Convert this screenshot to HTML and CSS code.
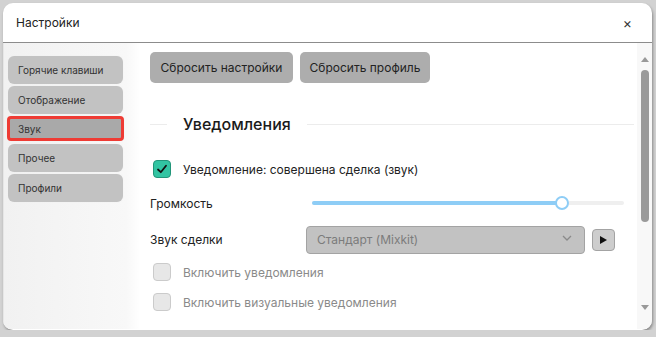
FILE: index.html
```html
<!DOCTYPE html>
<html lang="ru">
<head>
    <meta charset="UTF-8">
    <title>Настройки</title>
    <link rel="stylesheet" href="styles.css">
</head>
<body>
<div class="dialog">
    <div class="dlg_head">
        <span class="dlg_title">Настройки</span>
        <span class="dlg_close">×</span>
    </div>
    <div class="dlg_body">
        <!--меню слева-->
        <div class="side">
            <div class="side_item">Горячие клавиши</div>
            <div class="side_item">Отображение</div>
            <div class="side_item active">Звук</div>
            <div class="side_item">Прочее</div>
            <div class="side_item">Профили</div>
        </div>
        <!--основная часть-->
        <div class="main">
            <div class="actions">
                <button class="btn btn_wide">Сбросить настройки</button>
                <button class="btn">Сбросить профиль</button>
            </div>

            <div class="sec_title">
                <span class="line_short"></span>
                <span class="sec_text">Уведомления</span>
                <span class="line_long"></span>
            </div>

            <div class="row row_cb">
                <span class="cb checked">
                    <svg width="12" height="12" viewBox="0 0 12 12"><path d="M2 6.5 L4.8 9.2 L10 2.8" fill="none" stroke="#111" stroke-width="1.8" stroke-linecap="round" stroke-linejoin="round"/></svg>
                </span>
                <span class="cb_label">Уведомление: совершена сделка (звук)</span>
            </div>

            <div class="row row_vol">
                <span class="lbl">Громкость</span>
                <div class="slider">
                    <div class="slider_fill" style="width: 250px"></div>
                    <div class="slider_thumb"></div>
                </div>
            </div>

            <div class="row row_snd">
                <span class="lbl lbl_snd">Звук сделки</span>
                <div class="select">
                    <span>Стандарт (Mixkit)</span>
                    <svg class="chev" width="10" height="6" viewBox="0 0 10 6"><path d="M1 1 L5 5 L9 1" fill="none" stroke="#8a8a8a" stroke-width="1.3"/></svg>
                </div>
                <div class="play">
                    <svg width="7" height="8" viewBox="0 0 7 8"><path d="M0 0 L7 4 L0 8 Z" fill="#111"/></svg>
                </div>
            </div>

            <div class="row row_cb">
                <span class="cb off"></span>
                <span class="cb_label dis">Включить уведомления</span>
            </div>
            <div class="row row_cb">
                <span class="cb off"></span>
                <span class="cb_label dis">Включить визуальные уведомления</span>
            </div>
        </div>
        <!--полоса прокрутки-->
        <div class="scroll">
            <span class="arr arr_up"></span>
            <span class="thumb"></span>
            <span class="arr arr_down"></span>
        </div>
    </div>
</div>
</body>
</html>
```

FILE: styles.css
```css
*{
    margin: 0px;
    padding: 0px;
    box-sizing: border-box;
}
body{
    background-color: #d2d2d2;
    padding: 3px 4px 0 3px;
    font-family: Inter, "Noto Sans", sans-serif;
    color: #222;
}
.dialog{
    width: 649px;
    height: 327px;
    background-color: white;
    border-radius: 10px;
    box-shadow: 1px 2px 3px rgba(0,0,0,0.35);
    overflow: hidden;
}
.dlg_head{
    height: 40px;
    border-bottom: 1px solid #8c8c8c;
    display: flex;
    align-items: center;
    justify-content: space-between;
    padding: 0 20px 0 13px;
}
.dlg_title{
    font-size: 12px;
}
.dlg_close{
    font-size: 14px;
    color: #333;
}
.dlg_body{
    display: flex;
    height: 286px;
}
.side{
    width: 137px;
    background: linear-gradient(to right, #f1f1f1, #f8f8f8 90%, #ffffff);
    padding: 13px 0 0 4px;
    border-left: 1px solid #e6e6e6;
}
.side_item{
    width: 115px;
    height: 28px;
    margin-bottom: 2px;
    background-color: #c2c2c2;
    border-radius: 6px;
    box-shadow: 0 0 2px #f0f0f0;
    font-size: 10px;
    color: #333;
    display: flex;
    align-items: center;
    padding-left: 10px;
}
.side_item.active{
    width: 117px;
    margin: 1px 0 3px -1px;
    height: 25px;
    border: 3px solid #ee3b34;
    border-radius: 4px;
    background-color: #a9a9a9;
    padding-left: 8px;
}
.main{
    flex: 1;
    padding: 9px 0 0 10px;
}
.actions{
    display: flex;
    gap: 7px;
}
.btn{
    height: 31px;
    width: 130px;
    border: none;
    border-radius: 5px;
    background-color: #adadad;
    font-family: Inter, "Noto Sans", sans-serif;
    font-size: 12px;
    color: #222;
}
.btn_wide{
    width: 143px;
}
.sec_title{
    margin-top: 27px;
    height: 28px;
    display: flex;
    align-items: center;
}
.line_short{
    width: 17px;
    height: 1px;
    background-color: #ececec;
}
.sec_text{
    font-size: 16px;
    font-weight: 500;
    margin: 0 16px;
    color: #1a1a1a;
}
.line_long{
    flex: 1;
    height: 1px;
    background-color: #ececec;
    margin-right: 3px;
}
.row{
    display: flex;
    align-items: center;
    font-size: 12px;
}
.row_cb{
    height: 30px;
}
.sec_title + .row_cb{
    margin-top: 16px;
}
.cb{
    width: 18px;
    height: 18px;
    margin-left: 3px;
    margin-right: 12px;
    border-radius: 4px;
    display: flex;
    align-items: center;
    justify-content: center;
}
.cb.checked{
    background-color: #32c4a2;
    border: 1px solid #229579;
}
.cb.off{
    background-color: #e7e7e7;
    border: 1px solid #cbcbcb;
}
.cb_label{
    color: #222;
}
.cb_label.dis{
    color: #8a8a8a;
}
.row_vol{
    height: 38px;
}
.lbl{
    width: 162px;
}
.lbl_snd{
    width: 156px;
}
.slider{
    position: relative;
    width: 312px;
    height: 4px;
    background-color: #efefef;
    border-radius: 2px;
}
.slider_fill{
    height: 4px;
    background-color: #8ecdf6;
    border-radius: 2px;
}
.slider_thumb{
    position: absolute;
    left: 243px;
    top: -5px;
    width: 14px;
    height: 14px;
    border-radius: 50%;
    border: 2px solid #8ecdf6;
    background-color: white;
}
.row_snd{
    height: 35px;
}
.select{
    width: 279px;
    height: 28px;
    background-color: #c2c2c2;
    border: 1px solid #a3a3a3;
    border-radius: 4px;
    display: flex;
    align-items: center;
    justify-content: space-between;
    padding: 0 12px 0 10px;
    color: #7c7c7c;
}
.chev{
    margin-top: -4px;
}
.play{
    width: 23px;
    height: 22px;
    margin-left: 7px;
    background-color: #cdcdcd;
    border: 1px solid #a3a3a3;
    border-radius: 4px;
    display: flex;
    align-items: center;
    justify-content: center;
}
.scroll{
    width: 15px;
    background-color: #f8f8f8;
    display: flex;
    flex-direction: column;
    align-items: center;
    padding-top: 14px;
}
.arr{
    width: 0;
    height: 0;
    border-left: 4px solid transparent;
    border-right: 4px solid transparent;
}
.arr_up{
    border-bottom: 5px solid #999;
}
.thumb{
    width: 8px;
    height: 152px;
    margin-top: 8px;
    background-color: #9a9a9a;
    border-radius: 4px;
}
.arr_down{
    margin-top: 83px;
    border-top: 5px solid #999;
}
```
